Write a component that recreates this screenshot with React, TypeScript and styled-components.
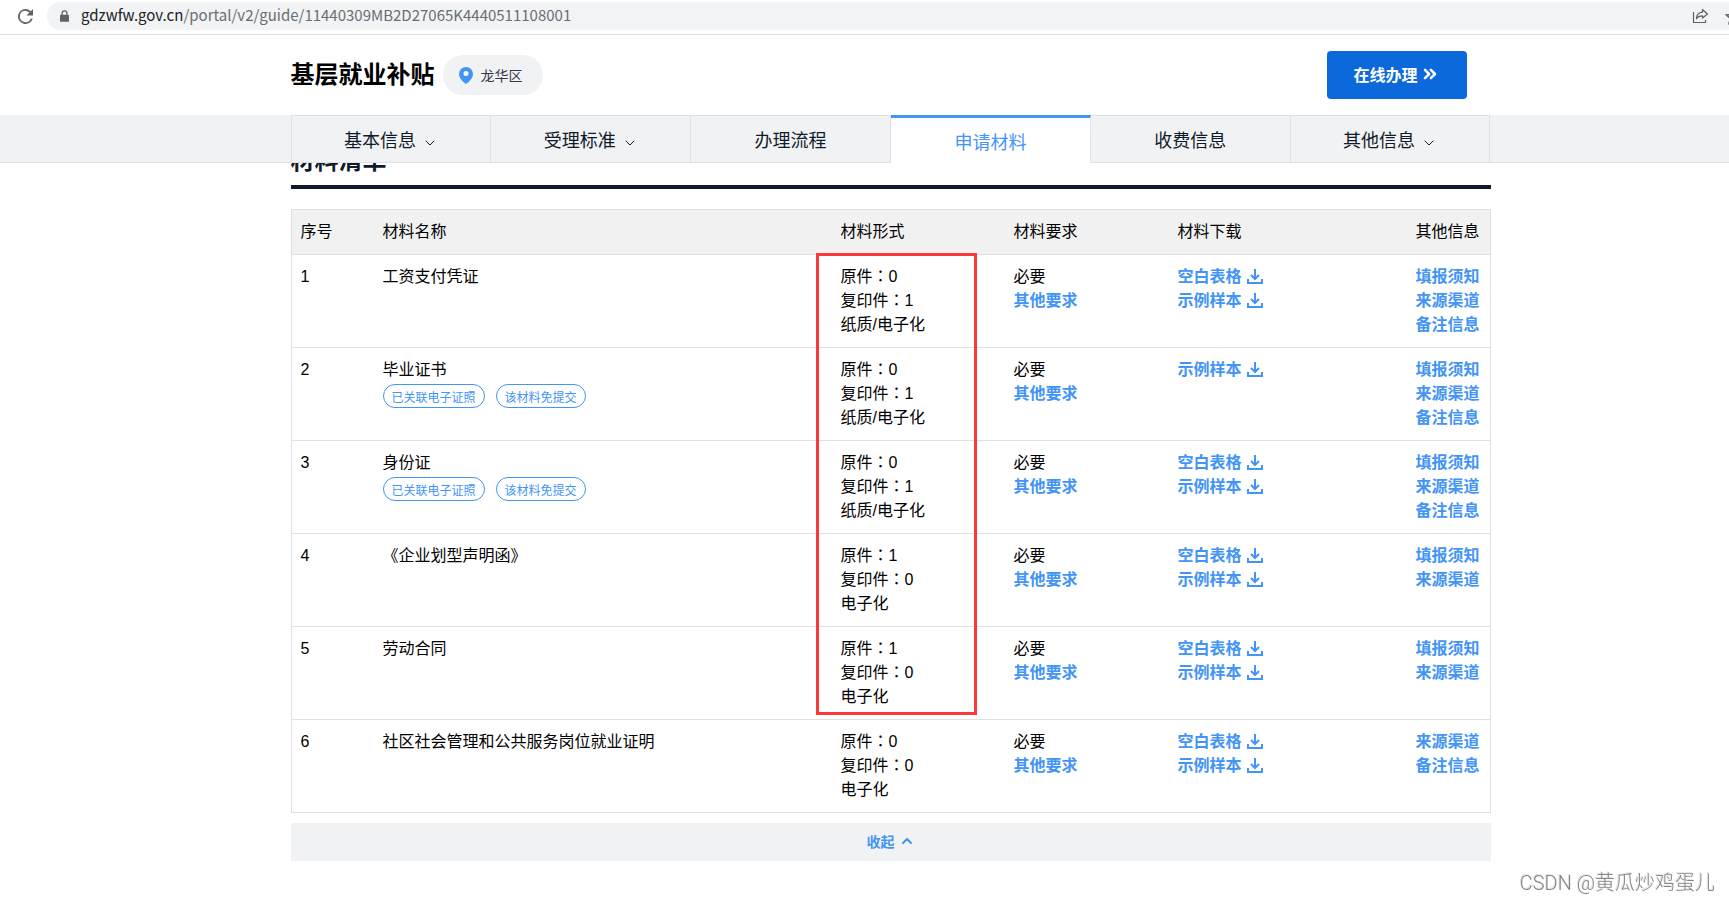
import React from 'react';
import styled, { createGlobalStyle, css } from 'styled-components';
import { ChevronDown, ChevronUp, ChevronsRight } from 'lucide-react';

const GlobalStyle = createGlobalStyle`
  *, *::before, *::after { box-sizing: border-box; }
  html { overflow-x: hidden; }
  body {
    margin: 0;
    overflow-x: hidden;
    background: #fff;
    color: #000;
    font-family: "Liberation Sans", "Noto Sans CJK SC", sans-serif;
    font-size: 16px;
    line-height: 24px;
  }
  button { font-family: inherit; cursor: pointer; }
  a { color: inherit; text-decoration: none; }
`;

const Window = styled.div`
  width: calc(100% + 52px);
`;

const BrowserBar = styled.div`
  display: flex;
  gap: 14px;
  height: 35px;
  padding: 2px 8px 4px 18px;
  border-bottom: 1px solid #dadce0;
`;

const IconButton = styled.button`
  display: flex;
  align-items: center;
  padding: 0;
  border: 0;
  background: none;
  color: #5f6368;
`;

const Omnibox = styled.div`
  display: flex;
  flex: 1;
  align-items: center;
  gap: 12px;
  height: 28px;
  padding: 0 31px 0 13px;
  border-radius: 14px;
  background: #f1f3f4;
  color: #5f6368;
`;

const Address = styled.div`
  flex: 1;
  padding-bottom: 2px;
  font-family: "Noto Sans CJK SC", sans-serif;
  font-size: 15px;
  color: #6a6e73;
`;

const PageActions = styled.div`
  display: flex;
  gap: 16px;
`;

const Host = styled.span`
  color: #202124;
`;

const Container = styled.div`
  width: 1200px;
  max-width: 100%;
  margin: 0 auto;
`;

const Header = styled(Container)`
  display: flex;
  align-items: center;
  height: 80px;
  padding-right: 24px;
`;

const Title = styled.h1`
  margin: 0 8px 0 0;
  font-size: 24px;
  line-height: 36px;
`;

const District = styled.button`
  display: flex;
  align-items: center;
  gap: 8px;
  height: 40px;
  padding: 0 20px 0 16px;
  border: 0;
  border-radius: 20px;
  background: #f1f2f4;
  color: #333b48;
  font-size: 14px;
`;

const ApplyButton = styled.button`
  display: flex;
  align-items: center;
  justify-content: center;
  gap: 2px;
  width: 140px;
  height: 48px;
  margin-left: auto;
  padding: 0 0 2px;
  border: 0;
  border-radius: 4px;
  background: #0b69dc;
  color: #fff;
  font-size: 16px;
  font-weight: 700;
`;

const NavBar = styled.nav`
  position: sticky;
  top: 0;
  z-index: 1;
  background: linear-gradient(#dfe1e4, #dfe1e4) bottom / 100% 1px no-repeat #f1f2f4;
`;

const TabList = styled(Container)`
  display: flex;
  height: 48px;
  border-left: 1px solid #dfe1e4;
`;

const Tab = styled.a<{ $active?: boolean }>`
  display: flex;
  flex: 1;
  align-items: center;
  justify-content: center;
  gap: 6px;
  padding-top: 2px;
  border-right: 1px solid #dfe1e4;
  border-top: 1px solid #dfe1e4;
  color: #0f1b2a;
  font-size: 18px;

  svg { margin-top: 4px; }

  ${({ $active }) => $active && css`
    padding-top: 4px;
    border-top: 3px solid #4294f7;
    background: #fff;
    color: #4294f7;
  `}
`;

const SectionTitle = styled.h2`
  margin: -20px 0 20px;
  padding-bottom: 6px;
  border-bottom: 4px solid #0f1b2a;
  color: #0f1b2a;
  font-size: 24px;
  line-height: 36px;
`;

const TableFrame = styled.div`
  position: relative;
`;

const Table = styled.table`
  width: 100%;
  border-collapse: separate;
  border-spacing: 0;
  table-layout: fixed;
  border: 1px solid #dfe1e4;
`;

const Row = styled.tr`
  height: 93px;
  vertical-align: top;
`;

const HeadRow = styled.tr`
  height: 44px;
  background: #f1f1f1;
`;

const HeadCell = styled.th<{ $right?: boolean }>`
  padding: 0 10px 0 9px;
  font-weight: 400;
  text-align: ${({ $right }) => ($right ? 'right' : 'left')};
`;

const Cell = styled.td<{ $right?: boolean }>`
  padding: 10px 10px 0 9px;
  border-top: 1px solid #dfe1e4;
  text-align: ${({ $right }) => ($right ? 'right' : 'left')};
`;

const Line = styled.div`
  height: 24px;
`;

const Colon = styled.span`
  font-family: "Noto Sans CJK TC", sans-serif;
  line-height: 0;
`;

const TextLink = styled.a`
  display: inline-flex;
  align-items: center;
  gap: 5px;
  height: 24px;
  color: #4294f7;
  font-weight: 700;
`;

const Tags = styled.div`
  display: flex;
  gap: 11px;
  margin-top: 2px;
`;

const Tag = styled.span`
  height: 24px;
  padding: 2px 8px 0;
  border: 1px solid #4294f7;
  border-radius: 12px;
  color: #4294f7;
  font-size: 12px;
  line-height: 22px;
`;

const Highlight = styled.div`
  position: absolute;
  top: 44px;
  left: 525px;
  width: 161px;
  height: 462px;
  border: 3px solid #fa3939;
  pointer-events: none;
`;

const CollapseButton = styled.button`
  display: flex;
  align-items: center;
  justify-content: center;
  gap: 4px;
  width: 100%;
  height: 38px;
  margin-top: 10px;
  padding: 0 0 2px;
  border: 0;
  background: #f1f2f4;
  color: #4294f7;
  font-size: 14px;
  font-weight: 700;
`;

const Watermark = styled.div`
  position: fixed;
  right: 14px;
  bottom: 4px;
  color: #868686;
  font-family: Roboto, "Noto Sans CJK SC", sans-serif;
  font-size: 20px;
  font-weight: 300;
  line-height: 30px;
  text-shadow: -1px -1px 0 #e4e4e4;
`;

const ReloadIcon = () => (
  <svg width="15" height="15" viewBox="0 0 16 16" fill="currentColor" aria-hidden="true">
    <path d="M13.65 2.35A7.96 7.96 0 0 0 8 0a8 8 0 1 0 7.73 10h-2.08A6 6 0 1 1 8 2c1.66 0 3.14.69 4.22 1.78L9 7h7V0z" />
  </svg>
);

const LockIcon = () => (
  <svg width="9" height="12" viewBox="0 0 10 13" fill="currentColor" aria-hidden="true">
    <path d="M1 5h8a1 1 0 0 1 1 1v6a1 1 0 0 1-1 1H1a1 1 0 0 1-1-1V6a1 1 0 0 1 1-1z" />
    <path d="M2.3 6V3.4a2.7 2.7 0 0 1 5.4 0V6" fill="none" stroke="currentColor" strokeWidth="1.4" />
  </svg>
);

const ShareIcon = () => (
  <svg width="17" height="16" viewBox="0 0 17 16" fill="none" stroke="currentColor" strokeWidth="1.2" aria-hidden="true">
    <path d="M1.5 4v10.5h12V12" />
    <path d="M10.500 1.500l5 4.500-5 4V7.800C7.500 7.800 5.800 8.500 4.500 10.800 4.500 7 6.800 4.600 10.500 4.200z" strokeLinejoin="round" />
  </svg>
);

const StarIcon = () => (
  <svg width="17" height="17" viewBox="0 0 24 24" fill="none" stroke="currentColor" strokeWidth="2" aria-hidden="true">
    <path d="M12 2.500l2.900 6.700 7.200.6-5.500 4.700 1.700 7.100L12 17.800l-6.300 3.800 1.700-7.100L1.900 9.800l7.200-.6z" />
  </svg>
);

const PinIcon = () => (
  <svg width="14" height="17" viewBox="0 0 14 17" aria-hidden="true">
    <path d="M7 0a7 7 0 0 1 7 7c0 4-3.500 7.500-7 10C3.500 14.500 0 11 0 7a7 7 0 0 1 7-7z" fill="#4294f7" />
    <circle cx="7" cy="6.500" r="2.500" fill="#fff" />
  </svg>
);

const DownloadIcon = () => (
  <svg width="16" height="16" viewBox="0 0 16 16" fill="none" stroke="currentColor" strokeWidth="2" aria-hidden="true">
    <path d="M8 0v10M4 6l4 4 4-4" />
    <path d="M1 10v4h14v-4" />
  </svg>
);

const tabs = [
  { label: '基本信息', menu: true },
  { label: '受理标准', menu: true },
  { label: '办理流程' },
  { label: '申请材料', active: true },
  { label: '收费信息' },
  { label: '其他信息', menu: true },
];

const columns = ['序号', '材料名称', '材料形式', '材料要求', '材料下载', '其他信息'];
const columnWidths = [82, 458, 173, 164, 190, 131];

interface Material {
  name: string;
  tags?: string[];
  original: number;
  copy: number;
  form: string;
  downloads: string[];
  notes: string[];
}

const cardTags = ['已关联电子证照', '该材料免提交'];
const blank = '空白表格';
const sample = '示例样本';
const fill = '填报须知';
const source = '来源渠道';
const remark = '备注信息';

const materials: Material[] = [
  { name: '工资支付凭证', original: 0, copy: 1, form: '纸质/电子化', downloads: [blank, sample], notes: [fill, source, remark] },
  { name: '毕业证书', tags: cardTags, original: 0, copy: 1, form: '纸质/电子化', downloads: [sample], notes: [fill, source, remark] },
  { name: '身份证', tags: cardTags, original: 0, copy: 1, form: '纸质/电子化', downloads: [blank, sample], notes: [fill, source, remark] },
  { name: '《企业划型声明函》', original: 1, copy: 0, form: '电子化', downloads: [blank, sample], notes: [fill, source] },
  { name: '劳动合同', original: 1, copy: 0, form: '电子化', downloads: [blank, sample], notes: [fill, source] },
  { name: '社区社会管理和公共服务岗位就业证明', original: 0, copy: 0, form: '电子化', downloads: [blank, sample], notes: [source, remark] },
];

export default function App() {
  return (
    <>
      <GlobalStyle />
      <Window>
        <BrowserBar>
          <IconButton aria-label="重新加载"><ReloadIcon /></IconButton>
          <Omnibox>
            <LockIcon />
            <Address><Host>gdzwfw.gov.cn</Host>/portal/v2/guide/11440309MB2D27065K4440511108001</Address>
            <PageActions>
              <IconButton aria-label="分享"><ShareIcon /></IconButton>
              <IconButton aria-label="收藏"><StarIcon /></IconButton>
            </PageActions>
          </Omnibox>
        </BrowserBar>
        <Header as="header">
          <Title>基层就业补贴</Title>
          <District><PinIcon />龙华区</District>
          <ApplyButton>在线办理<ChevronsRight size={20} strokeWidth={3} /></ApplyButton>
        </Header>
        <NavBar>
          <TabList>
            {tabs.map((tab) => (
              <Tab key={tab.label} href="#" $active={tab.active}>
                {tab.label}
                {tab.menu && <ChevronDown size={16} strokeWidth={1.5} />}
              </Tab>
            ))}
          </TabList>
        </NavBar>
        <Container as="main">
          <SectionTitle>材料清单</SectionTitle>
          <TableFrame>
            <Table>
              <colgroup>
                {columnWidths.map((width, i) => <col key={i} width={width} />)}
              </colgroup>
              <thead>
                <HeadRow>
                  {columns.map((label, i) => (
                    <HeadCell key={label} $right={i === columns.length - 1}>{label}</HeadCell>
                  ))}
                </HeadRow>
              </thead>
              <tbody>
                {materials.map((item, i) => (
                  <Row key={item.name}>
                    <Cell>{i + 1}</Cell>
                    <Cell>
                      <Line>{item.name}</Line>
                      {item.tags && <Tags>{item.tags.map((tag) => <Tag key={tag}>{tag}</Tag>)}</Tags>}
                    </Cell>
                    <Cell>
                      <Line>原件<Colon>：</Colon>{item.original}</Line>
                      <Line>复印件<Colon>：</Colon>{item.copy}</Line>
                      <Line>{item.form}</Line>
                    </Cell>
                    <Cell>
                      <Line>必要</Line>
                      <Line><TextLink href="#">其他要求</TextLink></Line>
                    </Cell>
                    <Cell>
                      {item.downloads.map((label) => (
                        <Line key={label}><TextLink href="#">{label}<DownloadIcon /></TextLink></Line>
                      ))}
                    </Cell>
                    <Cell $right>
                      {item.notes.map((label) => (
                        <Line key={label}><TextLink href="#">{label}</TextLink></Line>
                      ))}
                    </Cell>
                  </Row>
                ))}
              </tbody>
            </Table>
            <Highlight />
          </TableFrame>
          <CollapseButton>收起<ChevronUp size={16} strokeWidth={3} /></CollapseButton>
        </Container>
      </Window>
      <Watermark>CSDN @黄瓜炒鸡蛋儿</Watermark>
    </>
  );
}
